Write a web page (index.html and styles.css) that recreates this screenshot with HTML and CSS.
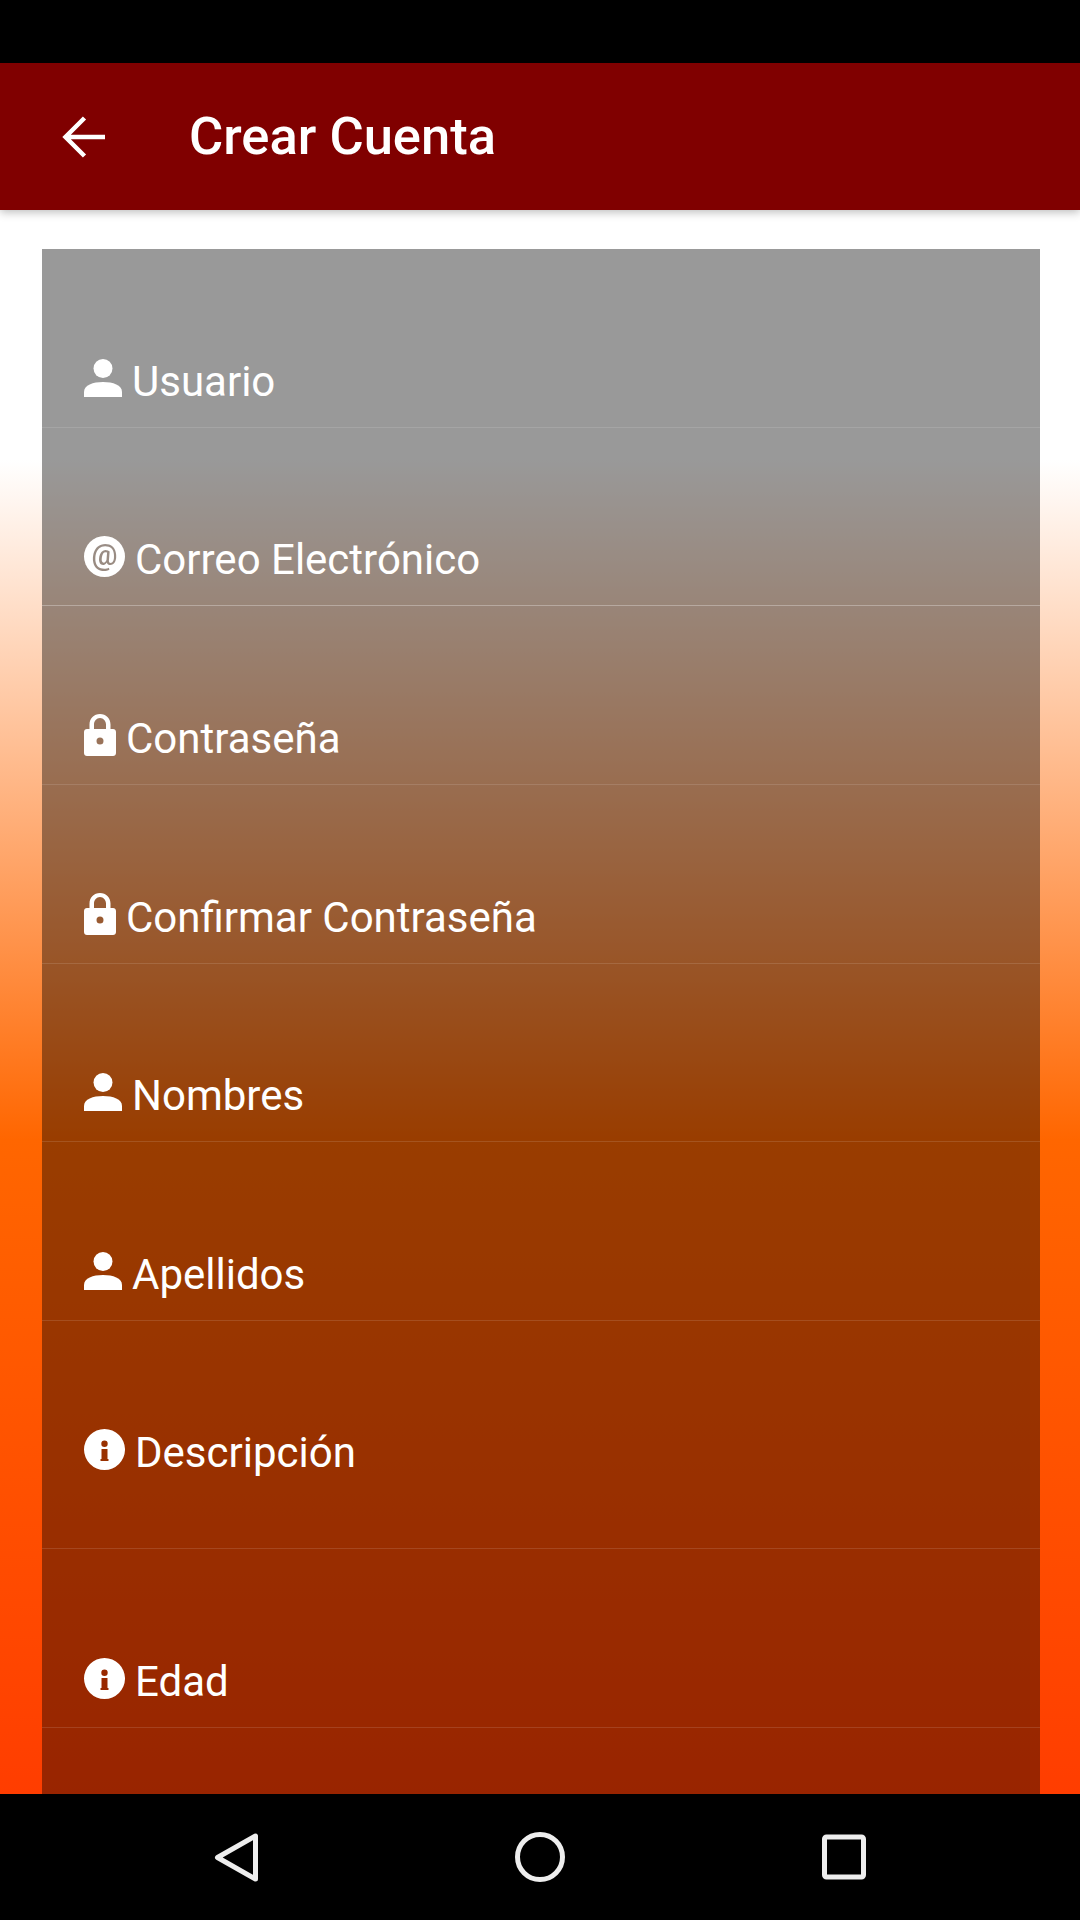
FILE: index.html
```html
<!DOCTYPE html>
<html lang="es">
<head>
<meta charset="utf-8">
<title>Crear Cuenta</title>
<link rel="stylesheet" href="styles.css">
</head>
<body>
<div class="screen">
  <div class="status-bar"></div>
  <header class="app-bar">
    <svg class="back-arrow" viewBox="0 0 44 42"><path d="M43 21H3.500M22.500 2 3.500 21l19 19"/></svg>
    <h1 class="title">Crear Cuenta</h1>
  </header>
  <main class="content">
    <form class="card">
      <div class="row"><svg class="icon icon-person" viewBox="0 0 38 38"><circle cx="19" cy="9.500" r="9.500"/><path d="M0 38v-5c0-7 9-10 19-10s19 3 19 10v5z"/></svg><span class="label">Usuario</span></div>
      <div class="row row-bright"><svg class="icon icon-round" viewBox="0 0 41 41"><mask id="at"><rect width="41" height="41" fill="#fff"/><text x="20.500" y="29" text-anchor="middle" class="at-sign">@</text></mask><circle cx="20.500" cy="20.500" r="20.500" mask="url(#at)"/></svg><span class="label label-wide">Correo Electrónico</span></div>
      <div class="row"><svg class="icon icon-lock" viewBox="0 0 32 42"><path fill-rule="evenodd" d="M3 15h2.500v-4.500C5.500 4.500 10 0 16 0s10.500 4.500 10.500 10.500V15H29c1.700 0 3 1.300 3 3v21c0 1.700-1.300 3-3 3H3c-1.700 0-3-1.300-3-3V18c0-1.700 1.300-3 3-3zm7 0h12v-4.500C22 7 19.500 4 16 4s-6 3-6 6.500zm6 8.500a3.500 3.500 0 1 0 0 7 3.500 3.500 0 0 0 0-7z"/></svg><span class="label">Contraseña</span></div>
      <div class="row"><svg class="icon icon-lock" viewBox="0 0 32 42"><path fill-rule="evenodd" d="M3 15h2.500v-4.500C5.500 4.500 10 0 16 0s10.500 4.500 10.500 10.500V15H29c1.700 0 3 1.300 3 3v21c0 1.700-1.300 3-3 3H3c-1.700 0-3-1.300-3-3V18c0-1.700 1.300-3 3-3zm7 0h12v-4.500C22 7 19.500 4 16 4s-6 3-6 6.500zm6 8.500a3.500 3.500 0 1 0 0 7 3.500 3.500 0 0 0 0-7z"/></svg><span class="label">Confirmar Contraseña</span></div>
      <div class="row"><svg class="icon icon-person" viewBox="0 0 38 38"><circle cx="19" cy="9.500" r="9.500"/><path d="M0 38v-5c0-7 9-10 19-10s19 3 19 10v5z"/></svg><span class="label">Nombres</span></div>
      <div class="row"><svg class="icon icon-person" viewBox="0 0 38 38"><circle cx="19" cy="9.500" r="9.500"/><path d="M0 38v-5c0-7 9-10 19-10s19 3 19 10v5z"/></svg><span class="label">Apellidos</span></div>
      <div class="row row-tall"><svg class="icon icon-round" viewBox="0 0 41 41"><path fill-rule="evenodd" d="M20.500 0a20.500 20.500 0 1 1 0 41 20.500 20.500 0 0 1 0-41zM20.500 11.500a3.200 3.200 0 1 0 0 6.400 3.200 3.200 0 0 0 0-6.400zM17.500 20h6v10h1v2h-8v-2h1V22h-0z"/></svg><span class="label label-wide">Descripción</span></div>
      <div class="row"><svg class="icon icon-round" viewBox="0 0 41 41"><path fill-rule="evenodd" d="M20.500 0a20.500 20.500 0 1 1 0 41 20.500 20.500 0 0 1 0-41zM20.500 11.500a3.200 3.200 0 1 0 0 6.400 3.200 3.200 0 0 0 0-6.400zM17.500 20h6v10h1v2h-8v-2h1V22h-0z"/></svg><span class="label label-wide">Edad</span></div>
      <div class="row"></div>
    </form>
  </main>
  <nav class="nav-bar">
    <svg class="nav-icon" viewBox="0 0 50 50"><path d="M44.500 4V47L6.500 25.500z"/></svg>
    <svg class="nav-icon" viewBox="0 0 50 50"><circle cx="25" cy="25" r="22.500"/></svg>
    <svg class="nav-icon" viewBox="0 0 50 50"><rect x="5.500" y="5" width="39" height="40" rx="2"/></svg>
  </nav>
</div>
</body>
</html>
```
FILE: styles.css
```css
* {
  box-sizing: border-box;
}

html,
body {
  margin: 0;
  padding: 0;
}

body {
  background: #000;
  font-family: Roboto, sans-serif;
}

.screen {
  display: flex;
  flex-direction: column;
  width: 1080px;
  height: 1920px;
  overflow: hidden;
}

.status-bar {
  flex: 0 0 63px;
  background: #000;
}

.app-bar {
  position: relative;
  z-index: 1;
  flex: 0 0 147px;
  display: flex;
  align-items: center;
  padding-left: 62px;
  background: #800000;
  box-shadow: 0 2px 9px rgba(0, 0, 0, 0.28);
}

.back-arrow {
  width: 44px;
  height: 42px;
  fill: none;
  stroke: #fff;
  stroke-width: 4.500;
}

.title {
  margin: 0 0 2px 83px;
  color: #fff;
  font-size: 52.500px;
  font-weight: 500;
  line-height: 56px;
}

.content {
  flex: 1 1 0;
  min-height: 0;
  overflow: hidden;
  padding: 39px 40.500px 0 42px;
  background: linear-gradient(to bottom, #fff 0, #fff 250px, #ff6600 930px, #ff3d00 100%);
}

.card {
  display: flex;
  flex-direction: column;
  margin: 0;
  background: rgba(0, 0, 0, 0.4);
}

.row {
  flex: 0 0 178.670px;
  display: flex;
  align-items: flex-end;
  padding: 0 0 22px 42px;
  border-bottom: 1px solid rgba(255, 255, 255, 0.12);
}

.row-bright {
  border-bottom-color: rgba(255, 255, 255, 0.3);
}

.row-tall {
  flex-basis: 228px;
  padding-bottom: 72px;
}

.icon {
  flex: none;
  fill: #fff;
}

.icon-person {
  width: 38px;
  height: 38px;
  margin: 0 10px 8px 0;
}

.icon-round {
  width: 41px;
  height: 41px;
  margin: 0 10px 6px 0;
}

.icon-lock {
  width: 32px;
  height: 42px;
  margin: 0 10px 6px 0;
}

.at-sign {
  font-family: Roboto, sans-serif;
  font-size: 29px;
  font-weight: 500;
  fill: #000;
}

.label {
  color: #fff;
  font-size: 42px;
  line-height: 47px;
}

.nav-bar {
  flex: 0 0 126px;
  display: flex;
  align-items: center;
  justify-content: center;
  gap: 254px;
  background: #000;
}

.nav-icon {
  width: 50px;
  height: 50px;
  fill: none;
  stroke: #eee;
  stroke-width: 5;
  stroke-linejoin: round;
}
```
